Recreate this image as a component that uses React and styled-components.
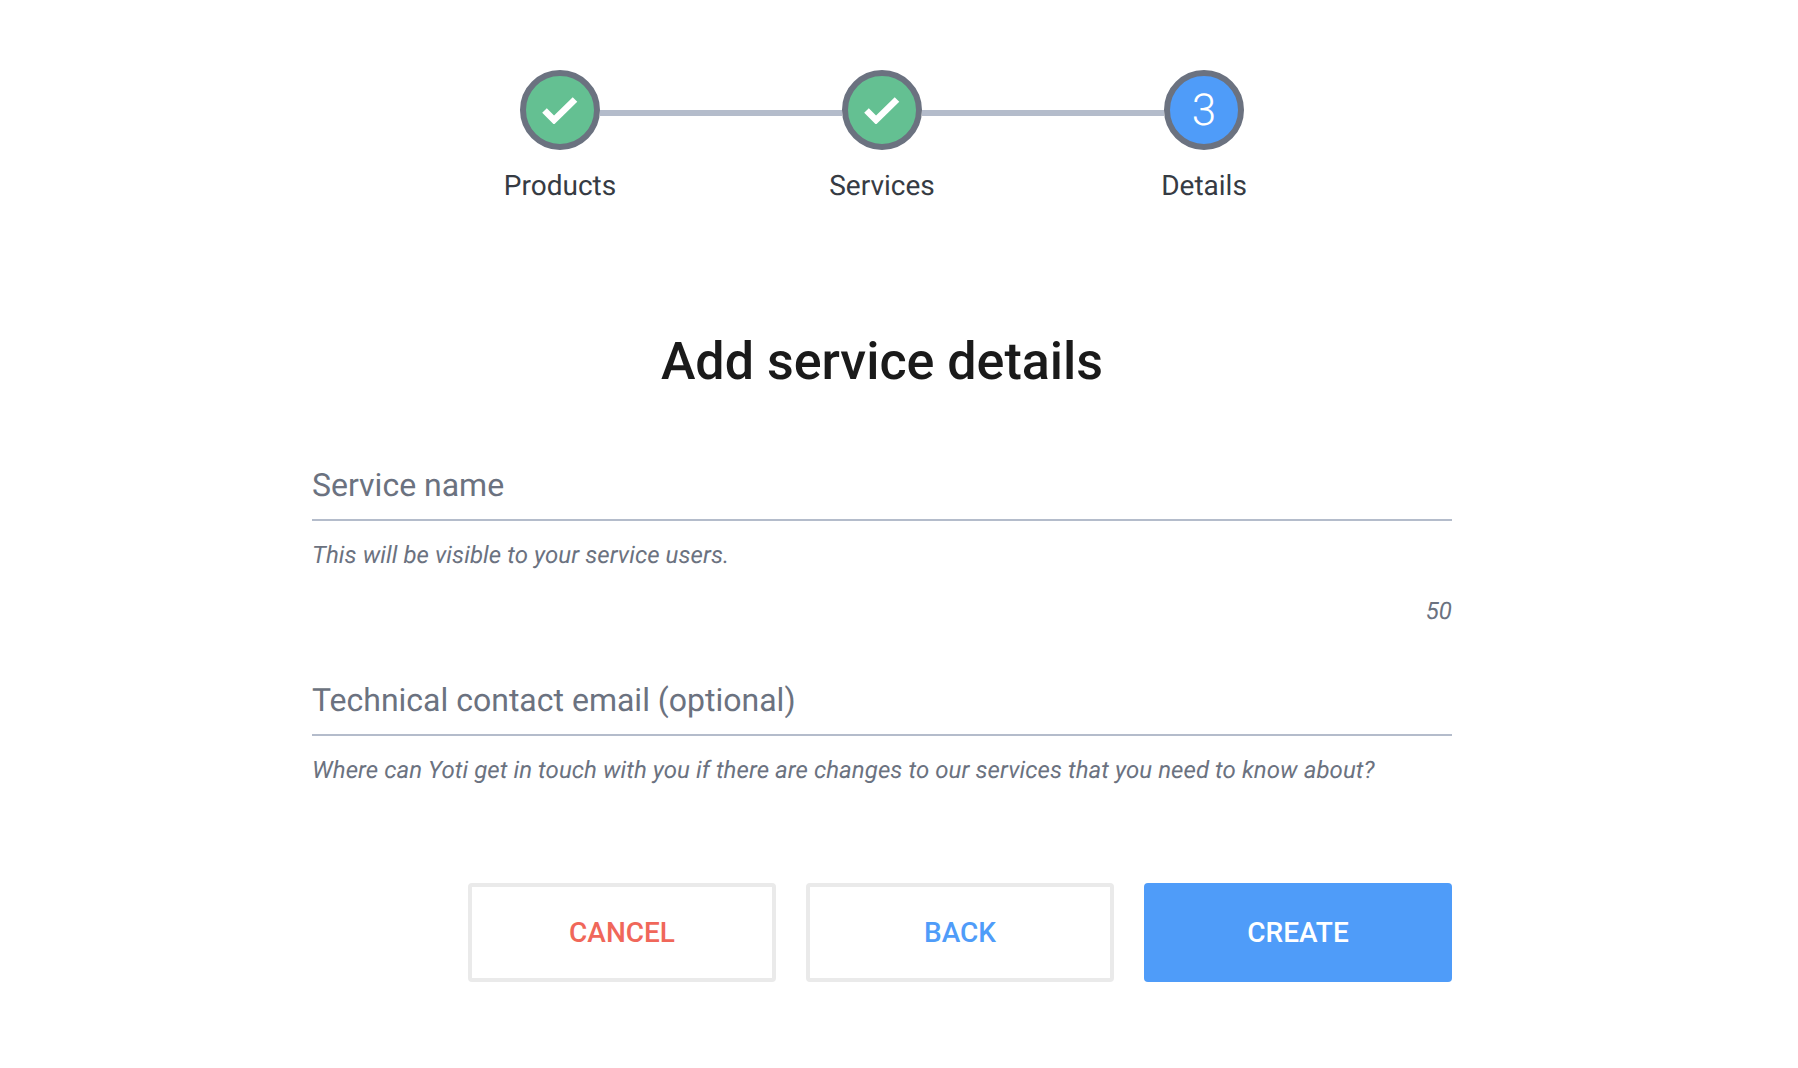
import React from 'react'
import styled, { createGlobalStyle } from 'styled-components'

const GlobalStyle = createGlobalStyle`
    html, body {
        margin: 0;
        padding: 0;
        background: #ffffff;
        font-family: Roboto, "Liberation Sans", sans-serif;
        text-rendering: geometricPrecision;
    }
`

const Page = styled.div`
    width: 1140px;
    margin-left: 312px;
    padding-top: 70px;
    display: flex;
    flex-direction: column;
`

const Stepper = styled.ol`
    list-style: none;
    margin: 0;
    padding: 0;
    display: flex;
    justify-content: center;
`

const Step = styled.li`
    position: relative;
    width: 322px;
    display: flex;
    flex-direction: column;
    align-items: center;

    &:not(:last-child)::after {
        content: '';
        position: absolute;
        top: 40px;
        left: calc(50% + 40px);
        width: 242px;
        height: 6px;
        background: #b4bccb;
    }
`

const Circle = styled.div`
    box-sizing: border-box;
    width: 80px;
    height: 80px;
    border: 6px solid #6b7280;
    border-radius: 50%;
    background: ${props => (props.$done ? '#64c092' : '#4f9cf9')};
    color: #ffffff;
    font-size: 44px;
    font-weight: 300;
    display: flex;
    align-items: center;
    justify-content: center;
`

const StepLabel = styled.div`
    margin-top: 20px;
    font-size: 28px;
    line-height: 32px;
    color: #363b43;
`

const Title = styled.h1`
    margin: 128px 0 0;
    text-align: center;
    font-size: 52px;
    line-height: 64px;
    font-weight: 500;
    color: #1a1a1a;
`

const Form = styled.form`
    margin-top: 66px;
    display: flex;
    flex-direction: column;
`

const Field = styled.div`
    display: flex;
    flex-direction: column;
    margin-bottom: ${props => props.$gap}px;
`

const Label = styled.div`
    box-sizing: border-box;
    height: 61px;
    line-height: 44px;
    padding-top: 3px;
    border-bottom: 2px solid #b4bccb;
    font-size: 32px;
    color: #6b7280;
`

const Help = styled.div`
    margin-top: 18px;
    font-size: 24px;
    line-height: 32px;
    font-style: italic;
    letter-spacing: 0.08px;
    color: #6b7280;
`

const Counter = styled(Help)`
    margin-top: 24px;
    text-align: right;
`

const Actions = styled.div`
    display: flex;
    justify-content: flex-end;
    gap: 30px;
`

const Button = styled.button`
    box-sizing: border-box;
    width: 308px;
    height: 99px;
    border: ${props => (props.$primary ? 'none' : '4px solid #eaeaea')};
    border-radius: 4px;
    background: ${props => (props.$primary ? '#4f9cf9' : '#ffffff')};
    color: ${props => props.$color};
    font-family: inherit;
    font-size: 28px;
    font-weight: 500;
    padding: 0;
`

function Check() {
    return (
        <svg width="36" height="28" viewBox="0 0 36 28" fill="none">
            <path d="M2.5 14.5 L12 24 L33 3.5" stroke="#ffffff" strokeWidth="6.5" />
        </svg>
    )
}

export default function App() {
    return (
        <Page>
            <GlobalStyle />
            <Stepper>
                <Step>
                    <Circle $done><Check /></Circle>
                    <StepLabel>Products</StepLabel>
                </Step>
                <Step>
                    <Circle $done><Check /></Circle>
                    <StepLabel>Services</StepLabel>
                </Step>
                <Step>
                    <Circle>3</Circle>
                    <StepLabel>Details</StepLabel>
                </Step>
            </Stepper>
            <Title>Add service details</Title>
            <Form>
                <Field $gap={48}>
                    <Label>Service name</Label>
                    <Help>This will be visible to your service users.</Help>
                    <Counter>50</Counter>
                </Field>
                <Field $gap={97}>
                    <Label>Technical contact email (optional)</Label>
                    <Help>Where can Yoti get in touch with you if there are changes to our services that you need to know about?</Help>
                </Field>
                <Actions>
                    <Button type="button" $color="#f0675a">CANCEL</Button>
                    <Button type="button" $color="#4f9cf9">BACK</Button>
                    <Button type="button" $primary $color="#ffffff">CREATE</Button>
                </Actions>
            </Form>
        </Page>
    )
}
